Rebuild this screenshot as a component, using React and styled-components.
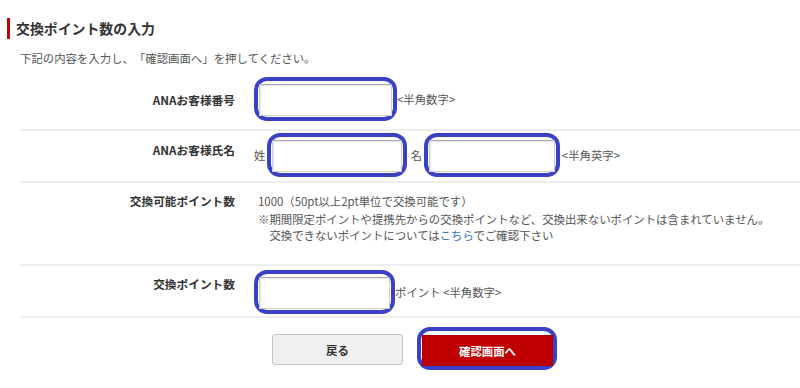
import React from 'react'
import styled, { createGlobalStyle } from 'styled-components'

const Global = createGlobalStyle`
  html, body { margin: 0; padding: 0; background: #fff; }
  body {
    font-family: "Noto Sans CJK JP", "Noto Sans", sans-serif;
    color: #444;
    font-size: 11.4px;
    text-spacing-trim: space-all;
  }
`

function App() {
  return (
    <>
      <Global />
      <Page>
        <Heading>交換ポイント数の入力</Heading>
        <Lead>下記の内容を入力し、「確認画面へ」を押してください。</Lead>

        <Form>
          <Row $pad="4px 0 8px">
            <Label $top={15}>ANAお客様番号</Label>
            <Value>
              <Mark>
                <Field $w={133} />
              </Mark>
              <Hint>&lt;半角数字&gt;</Hint>
            </Value>
          </Row>

          <Row $pad="2px 0 4px">
            <Label $top={9}>ANAお客様氏名</Label>
            <Value>
              <Hint $mr={2}>姓</Hint>
              <Mark>
                <Field $w={130} />
              </Mark>
              <Hint $ml={3} $mr={2}>名</Hint>
              <Mark>
                <Field $w={126} />
              </Mark>
              <Hint $ml={2}>&lt;半角英字&gt;</Hint>
            </Value>
          </Row>

          <Row $pad="10px 0 21px">
            <Label $top={0}>交換可能ポイント数</Label>
            <Text>
              <div>1000（50pt以上2pt単位で交換可能です）</div>
              <Note>
                ※期間限定ポイントや提携先からの交換ポイントなど、交換出来ないポイントは含まれていません。
                <br />
                交換できないポイントについては<Link href="#">こちら</Link>でご確認下さい
              </Note>
            </Text>
          </Row>

          <Row $pad="4px 0 2px">
            <Label $top={6}>交換ポイント数</Label>
            <Value>
              <Mark>
                <Field $w={131} />
              </Mark>
              <Hint>ポイント &lt;半角数字&gt;</Hint>
            </Value>
          </Row>
        </Form>

        <Buttons>
          <BackButton>戻る</BackButton>
          <Mark $pad="4px 0 0 1px">
            <SubmitButton>確認画面へ</SubmitButton>
          </Mark>
        </Buttons>
      </Page>
    </>
  )
}

export default App

const Page = styled.div`
  padding: 18px 0 20px 7px;
`

const Heading = styled.h2`
  margin: 0;
  border-left: 3px solid #c40000;
  padding-left: 6px;
  height: 21px;
  line-height: 21px;
  font-size: 13.9px;
  font-weight: bold;
  color: #333;
`

const Lead = styled.p`
  margin: 11px 0 0 13px;
  line-height: 16px;
  color: #555;
`

const Form = styled.div`
  margin: 7px 0 0 13px;
`

const Row = styled.div`
  display: grid;
  grid-template-columns: 215px 1fr;
  column-gap: 19px;
  align-items: start;
  padding: ${p => p.$pad};
  border-bottom: 2px solid #eeeeee;
`

const Label = styled.div`
  padding-top: ${p => p.$top}px;
  text-align: right;
  line-height: 16px;
  font-size: 11.7px;
  font-weight: bold;
  color: #333;
`

const Value = styled.div`
  display: flex;
  align-items: center;
`

const Mark = styled.div`
  border: 4px solid #3b41c5;
  border-radius: 13px;
  padding: ${p => p.$pad || '3px 1px 1px 1px'};
`

const Field = styled.input.attrs({ type: 'text' })`
  display: block;
  box-sizing: border-box;
  width: ${p => p.$w}px;
  height: 32px;
  margin: 0;
  border: 1px solid #cfcfcf;
  border-top-color: #a8a8a8;
  box-shadow: inset 1px 1px 2px rgba(0, 0, 0, 0.1);
  background: #fff;
  outline: none;
`

const Hint = styled.span`
  margin-left: ${p => p.$ml || 0}px;
  margin-right: ${p => p.$mr || 0}px;
  line-height: 16px;
  color: #555;
`

const Text = styled.div`
  padding-left: 4px;
  line-height: 16px;
  color: #555;
`

const Note = styled.div`
  margin-top: 2px;
  padding-left: 1em;
  text-indent: -1em;
`

const Link = styled.a`
  color: #2f6fbd;
  text-decoration: none;
`

const Buttons = styled.div`
  display: flex;
  justify-content: center;
  align-items: flex-start;
  gap: 14px;
  margin-top: 9px;
  padding-left: 22px;
`

const BaseButton = styled.button`
  box-sizing: border-box;
  width: 131px;
  height: 31px;
  border-radius: 3px;
  font-family: inherit;
  font-size: 11.4px;
  font-weight: bold;
  cursor: pointer;
`

const BackButton = styled(BaseButton)`
  margin-top: 7px;
  background: #f0f0f0;
  border: 1px solid #c4c4c4;
  color: #333;
`

const SubmitButton = styled(BaseButton)`
  display: block;
  background: #c00000;
  border: 1px solid #b00000;
  border-radius: 0;
  color: #fff;
`
